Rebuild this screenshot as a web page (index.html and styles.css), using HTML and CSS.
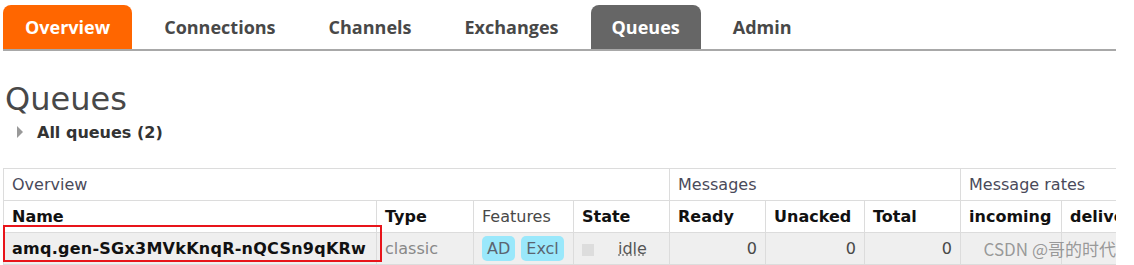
FILE: index.html
```html
<!DOCTYPE html>
<html lang="en">
<head>
    <meta charset="UTF-8">
    <title>Queues</title>
    <link rel="stylesheet" href="styles.css">
</head>
<body>
    <div class="page">
        <ul class="tabs">
            <li class="tab tab-orange">Overview</li>
            <li class="tab">Connections</li>
            <li class="tab">Channels</li>
            <li class="tab">Exchanges</li>
            <li class="tab tab-active">Queues</li>
            <li class="tab">Admin</li>
        </ul>

        <h1>Queues</h1>
        <div class="section-toggle"><span class="arrow"></span>All queues (2)</div>

        <div class="table-wrap">
            <table class="list">
                <colgroup>
                    <col class="c-name"><col class="c-type"><col class="c-feat"><col class="c-state">
                    <col class="c-ready"><col class="c-unacked"><col class="c-total">
                    <col class="c-in"><col class="c-deliver">
                </colgroup>
                <tr class="group-row">
                    <th colspan="4">Overview</th>
                    <th colspan="3">Messages</th>
                    <th colspan="2">Message rates</th>
                </tr>
                <tr class="head-row">
                    <th>Name</th>
                    <th>Type</th>
                    <th class="plain">Features</th>
                    <th>State</th>
                    <th>Ready</th>
                    <th>Unacked</th>
                    <th>Total</th>
                    <th>incoming</th>
                    <th>deliver / get</th>
                </tr>
                <tr class="data-row">
                    <td class="name">amq.gen-SGx3MVkKnqR-nQCSn9qKRw</td>
                    <td class="muted">classic</td>
                    <td><span class="badge">AD</span><span class="badge">Excl</span></td>
                    <td><span class="state-box"></span><abbr class="state">idle</abbr></td>
                    <td class="num">0</td>
                    <td class="num">0</td>
                    <td class="num">0</td>
                    <td></td>
                    <td></td>
                </tr>
            </table>
            <div class="highlight"></div>
            <div class="watermark">CSDN @哥的时代</div>
        </div>
    </div>
</body>
</html>
```

FILE: styles.css
```css
body {
    margin: 0;
    padding: 0;
    background: #fff;
    color: #484848;
    font-family: 'DejaVu Sans', Verdana, sans-serif;
}

.page {
    width: 1113px;
    margin-left: 3px;
    overflow: hidden;
}

.tabs {
    display: flex;
    gap: 11px;
    list-style: none;
    margin: 5px 0 0 0;
    padding: 0;
    border-bottom: 2px solid #a8a8a8;
}

.tab {
    height: 44px;
    line-height: 44px;
    padding: 0 21px;
    border-radius: 8px 8px 0 0;
    font-family: 'Open Sans', sans-serif;
    font-weight: bold;
    font-size: 18px;
    color: #484848;
}

.tab-orange {
    background: #ff6600;
    color: #fff;
    padding: 0 22px;
}

.tab-active {
    background: #666;
    color: #fff;
}

h1 {
    margin: 32px 0 0 2px;
    font-size: 32px;
    font-weight: normal;
    line-height: 32px;
    color: #484848;
}

.section-toggle {
    display: flex;
    align-items: center;
    margin-top: 7px;
    padding-left: 14px;
    height: 20px;
    font-size: 16px;
    font-weight: bold;
    color: #333;
}

.arrow {
    width: 0;
    height: 0;
    border-top: 6px solid transparent;
    border-bottom: 6px solid transparent;
    border-left: 6px solid #999;
    margin-right: 14px;
}

.table-wrap {
    position: relative;
    margin-top: 26px;
}

.list {
    border-collapse: collapse;
    table-layout: fixed;
    width: 1200px;
    font-size: 16px;
}

.c-name { width: 373px; }
.c-type { width: 97px; }
.c-feat { width: 100px; }
.c-state { width: 96px; }
.c-ready { width: 96px; }
.c-unacked { width: 99px; }
.c-total { width: 96px; }
.c-in { width: 101px; }
.c-deliver { width: 142px; }

.list th,
.list td {
    border: 1px solid #dcdcdc;
    height: 31px;
    padding: 0 8px;
    text-align: left;
    white-space: nowrap;
    overflow: hidden;
}

.group-row th {
    font-weight: normal;
    color: #4a4a5a;
}

.head-row th {
    font-weight: bold;
    color: #111;
}

.head-row th.plain {
    font-weight: normal;
    color: #484848;
}

.data-row td {
    background: #efefef;
    color: #484848;
}

.data-row td.name {
    font-weight: bold;
    color: #111;
    letter-spacing: 0.25px;
}

.muted {
    color: #888 !important;
}

.num {
    text-align: right !important;
}

.badge {
    display: inline-block;
    background: #9ae8fb;
    color: #5a6470;
    border-radius: 5px;
    padding: 0 5px;
    height: 25px;
    line-height: 25px;
    margin-right: 6px;
    vertical-align: middle;
}

.state-box {
    display: inline-block;
    width: 12px;
    height: 12px;
    background: #ddd;
    margin-right: 24px;
    vertical-align: middle;
}

.state {
    text-decoration: underline dotted #888;
    color: #555;
}

.highlight {
    position: absolute;
    left: 0;
    top: 57px;
    width: 375px;
    height: 33px;
    border: 2px solid #e8141a;
}

.watermark {
    position: absolute;
    right: 0;
    top: 70px;
    font-family: 'Noto Sans CJK SC', sans-serif;
    font-size: 17px;
    line-height: 22px;
    color: rgba(130, 130, 130, 0.8);
}
```
